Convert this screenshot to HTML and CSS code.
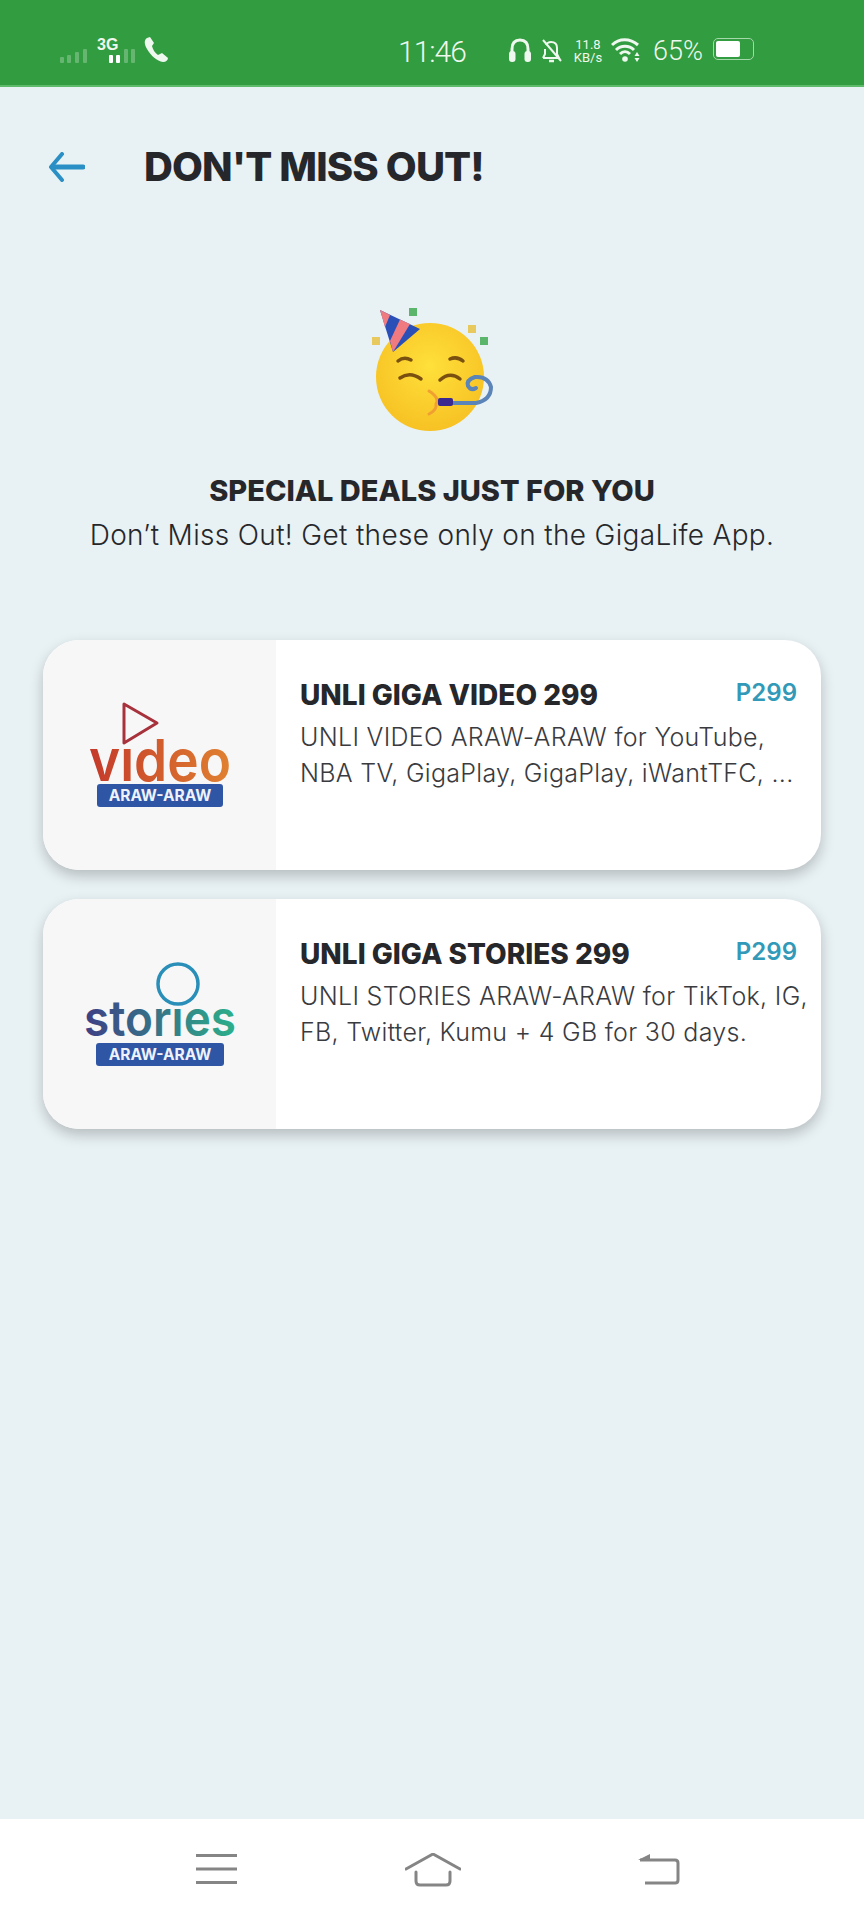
FILE: index.html
```html
<!DOCTYPE html>
<html lang="en">
    <head>
        <meta charset="UTF-8" />
        <meta name="viewport" content="width=device-width, initial-scale=1.0" />
        <title>Don't Miss Out</title>
        <link rel="stylesheet" href="styles.css">
    </head>
    <body>
        <div class="status-bar">
            <svg class="signal" width="76" height="28" viewBox="0 0 76 28">
                <g fill="#fff" opacity="0.25">
                    <rect x="0" y="21" width="4" height="6" rx="1" />
                    <rect x="7" y="19" width="4" height="8" rx="1" />
                    <rect x="15" y="16" width="4" height="11" rx="1" />
                    <rect x="23" y="13" width="4" height="14" rx="1" />
                    <rect x="64" y="13" width="4" height="14" rx="1" />
                    <rect x="71" y="13" width="4" height="14" rx="1" />
                </g>
                <g fill="#fff">
                    <rect x="49" y="19" width="4" height="8" rx="1" />
                    <rect x="56" y="19" width="4" height="8" rx="1" />
                </g>
                <text x="37" y="14" class="signal-label">3G</text>
            </svg>
            <svg class="phone" width="24" height="26" viewBox="0 0 24 26">
                <path d="M3 1 C0 3 0 7 3 12 C7 19 13 24 19 25 C22 25 24 23 24 21 L18 16 L14 18 C11 16 9 13 8 9 L10 6 L6 0 Z" fill="#eef8ee" />
            </svg>
            <span class="clock">11:46</span>
            <div class="status-right">
                <svg width="22" height="25" viewBox="0 0 22 25">
                    <path d="M3 17 V11 C3 5 6 2 11 2 C16 2 19 5 19 11 V17" fill="none" stroke="#eef8ee" stroke-width="3" />
                    <rect x="0" y="13" width="6.500" height="11" rx="3" fill="#eef8ee" />
                    <rect x="15.500" y="13" width="6.500" height="11" rx="3" fill="#eef8ee" />
                </svg>
                <svg class="bell" width="22" height="26" viewBox="0 0 22 26">
                    <path d="M2 20 H18 L16 16 V10 C16 6 14 4 10 4 C8 4 6 5 5 7 M4 11 V16 L2 20" fill="none" stroke="#eef8ee" stroke-width="2" />
                    <path d="M8 23 H13" stroke="#eef8ee" stroke-width="2.500" />
                    <path d="M2 2 L20 23" stroke="#eef8ee" stroke-width="2" />
                </svg>
                <div class="speed">
                    <span>11.8</span>
                    <span>KB/s</span>
                </div>
                <svg class="wifi" width="30" height="25" viewBox="0 0 30 25">
                    <path d="M1 7 C8 0 19 0 27 7 M5 12 C10 7 18 7 23 12 M9 16 C12 13 16 13 19 16" fill="none" stroke="#eef8ee" stroke-width="3" />
                    <circle cx="14" cy="21" r="2.800" fill="#eef8ee" />
                    <path d="M26 14 L28.500 18 H23.500 Z M26 24 L28.500 20 H23.500 Z" fill="#eef8ee" />
                </svg>
                <span class="battery-pct">65%</span>
                <div class="battery"><div class="battery-fill"></div></div>
            </div>
        </div>
        <div class="status-line"></div>

        <div class="top-row">
            <svg width="36" height="30" viewBox="0 0 36 30">
                <path d="M13 2 L2 15 L13 28" fill="none" stroke="#2a8fc4" stroke-width="4" stroke-linecap="round" stroke-linejoin="round" />
                <path d="M4 15 H34" fill="none" stroke="#2a8fc4" stroke-width="5" stroke-linecap="round" />
            </svg>
            <h1>DON'T MISS OUT!</h1>
        </div>

        <div class="intro">
            <svg class="party" width="180" height="160" viewBox="0 0 180 160">
                <defs>
                    <radialGradient id="faceFill" cx="0.5" cy="0.4" r="0.65">
                        <stop offset="0" stop-color="#ffe03a" />
                        <stop offset="1" stop-color="#f6bf22" />
                    </radialGradient>
                </defs>
                <circle cx="90" cy="87" r="54" fill="url(#faceFill)" />
                <polygon points="40,20 80,39 53,62" fill="#2a50b8" />
                <polygon points="40,20 50,25 45,37" fill="#ef7a80" />
                <polygon points="60,29.500 70,34 53,62 50,51" fill="#ef7a80" />
                <g fill="#5bb56a">
                    <rect x="69" y="18" width="8" height="8" />
                    <rect x="140" y="47" width="8" height="8" />
                </g>
                <g fill="#e8c95e">
                    <rect x="32" y="47" width="8" height="8" />
                    <rect x="128" y="35" width="8" height="8" />
                </g>
                <g fill="none" stroke="#7a5010" stroke-width="3.500" stroke-linecap="round">
                    <path d="M58 71 Q64 66 71 70" />
                    <path d="M110 69 Q117 66 123 71" />
                    <path d="M60 88 Q70 81 81 89" />
                    <path d="M100 90 Q110 81 120 89" />
                </g>
                <path d="M89 101 Q100 108 96 114 Q97 120 89 124" fill="none" stroke="#f0a030" stroke-width="3" stroke-linecap="round" />
                <path d="M113 113 H136 Q151 110 151 97 Q148 86 135 87 Q126 90 128 96 Q131 101 136 98" fill="none" stroke="#5b85b8" stroke-width="4" stroke-linecap="round" />
                <rect x="98" y="108" width="15" height="8" rx="2" fill="#3a2a90" />
            </svg>
            <h2>SPECIAL DEALS JUST FOR YOU</h2>
            <p class="intro-sub">Don’t Miss Out! Get these only on the GigaLife App.</p>
        </div>

        <div class="deals">
            <div class="card">
                <div class="card-logo">
                    <svg width="160" height="120" viewBox="0 0 160 120">
                        <defs>
                            <linearGradient id="videoFill" gradientUnits="userSpaceOnUse" x1="11" y1="0" x2="149" y2="0">
                                <stop offset="0" stop-color="#c43a2a" />
                                <stop offset="1" stop-color="#e08030" />
                            </linearGradient>
                        </defs>
                        <path d="M44 9 L77 28 L44 48 Z" fill="none" stroke="#a8323c" stroke-width="3" stroke-linejoin="round" />
                        <text x="9" y="86" textLength="142" lengthAdjust="spacingAndGlyphs" class="logo-word" fill="url(#videoFill)">vıdeo</text>
                        <rect x="17" y="89" width="126" height="23" rx="3" fill="#2f55a5" />
                        <text x="80" y="106" class="logo-badge">ARAW-ARAW</text>
                    </svg>
                </div>
                <div class="card-body">
                    <div class="card-head">
                        <span class="card-title">UNLI GIGA VIDEO 299</span>
                        <span class="card-price">P299</span>
                    </div>
                    <p class="card-text">UNLI VIDEO ARAW-ARAW for YouTube, NBA TV, GigaPlay, GigaPlay, iWantTFC, ...</p>
                </div>
            </div>
            <div class="card">
                <div class="card-logo">
                    <svg width="160" height="120" viewBox="0 0 160 120">
                        <defs>
                            <linearGradient id="storiesFill" gradientUnits="userSpaceOnUse" x1="5" y1="0" x2="154" y2="0">
                                <stop offset="0" stop-color="#3e3f85" />
                                <stop offset="1" stop-color="#2cae8a" />
                            </linearGradient>
                        </defs>
                        <circle cx="98" cy="30" r="20" fill="none" stroke="#2a8fb8" stroke-width="3.500" />
                        <text x="4" y="82" textLength="152" lengthAdjust="spacingAndGlyphs" class="logo-word logo-word-small" fill="url(#storiesFill)">storıes</text>
                        <rect x="16" y="89" width="128" height="23" rx="3" fill="#2f55a5" />
                        <text x="80" y="106" class="logo-badge">ARAW-ARAW</text>
                    </svg>
                </div>
                <div class="card-body">
                    <div class="card-head">
                        <span class="card-title">UNLI GIGA STORIES 299</span>
                        <span class="card-price">P299</span>
                    </div>
                    <p class="card-text">UNLI STORIES ARAW-ARAW for TikTok, IG, FB, Twitter, Kumu + 4 GB for 30 days.</p>
                </div>
            </div>
        </div>

        <div class="nav-bar">
            <svg width="41" height="32" viewBox="0 0 41 32">
                <path d="M0 2.500 H41 M0 16 H41 M0 29.500 H41" stroke="#858585" stroke-width="3" />
            </svg>
            <svg class="nav-home" width="56" height="34" viewBox="0 0 56 34">
                <path d="M1 16 L28 1 L55 16" fill="none" stroke="#858585" stroke-width="3" stroke-linecap="round" stroke-linejoin="round" />
                <path d="M11 19 V28 Q11 32 15 32 H41 Q45 32 45 28 V19" fill="none" stroke="#858585" stroke-width="3" stroke-linecap="round" />
            </svg>
            <svg width="42" height="32" viewBox="0 0 42 32">
                <path d="M0 7 L12 1 V7 Z" fill="#858585" />
                <path d="M2 7 H37 Q40 7 40 10 V27 Q40 30 37 30 H7" fill="none" stroke="#858585" stroke-width="3" />
            </svg>
        </div>
    </body>
</html>
```

FILE: styles.css
```css
body {
    font-family: Inter, "Liberation Sans", sans-serif;
    background-color: #e8f1f4;
    margin: 0;
    padding: 0;
    width: 864px;
    height: 1920px;
    display: flex;
    flex-direction: column;
    overflow: hidden;
    color: #26272b;
}
h1,
h2,
p {
    margin: 0;
}
.status-bar {
    background-color: #329c40;
    height: 85px;
    padding: 36px 0 0 60px;
    box-sizing: border-box;
    display: flex;
    align-items: flex-start;
    color: #eef8ee;
}
.status-line {
    height: 2px;
    background-color: #5dbb6b;
}
.phone {
    margin: 1px 0 0 8px;
}
.signal-label {
    font-family: "Liberation Sans", sans-serif;
    font-size: 16px;
    font-weight: 700;
    fill: #eef8ee;
}
.clock {
    font-family: Roboto, sans-serif;
    font-size: 30px;
    font-weight: 300;
    line-height: 32px;
    letter-spacing: -1px;
    margin: 0 0 0 230px;
    width: 66px;
}
.status-right {
    display: flex;
    align-items: flex-start;
    margin-left: 45px;
    gap: 10px;
    padding-top: 2px;
}
.speed {
    display: flex;
    flex-direction: column;
    font-family: Roboto, sans-serif;
    font-size: 13px;
    line-height: 13px;
    width: 30px;
    text-align: center;
}
.wifi {
    margin-left: -2px;
}
.battery-pct {
    font-family: Roboto, sans-serif;
    font-size: 27px;
    font-weight: 300;
    line-height: 27px;
    margin-left: 2px;
}
.battery {
    width: 41px;
    height: 22px;
    border: 1px solid #a5d8ab;
    border-radius: 5px;
    box-sizing: border-box;
    padding: 2px;
}
.battery-fill {
    width: 24px;
    height: 100%;
    background-color: #fff;
    border-radius: 2px;
}
.top-row {
    display: flex;
    align-items: center;
    padding: 60px 0 0 49px;
    gap: 59px;
}
h1 {
    font-size: 40px;
    font-weight: 800;
    line-height: 40px;
    letter-spacing: -0.85px;
}
.intro {
    display: flex;
    flex-direction: column;
    align-items: center;
    margin-top: 103px;
}
.party {
    margin-left: -4px;
}
h2 {
    font-size: 29px;
    font-weight: 800;
    line-height: 34px;
    margin-top: 24px;
}
.intro-sub {
    font-size: 28px;
    font-weight: 300;
    line-height: 36px;
    letter-spacing: 0.33px;
    margin-top: 9px;
}
.deals {
    display: flex;
    flex-direction: column;
    gap: 29px;
    margin: 87px 43px 0;
}
.card {
    display: flex;
    height: 230px;
    background-color: #fff;
    border-radius: 36px;
    box-shadow: 0 6px 14px rgba(0, 0, 0, 0.22);
    overflow: hidden;
}
.card-logo {
    width: 233px;
    flex-shrink: 0;
    background-color: #f7f7f8;
    display: flex;
    align-items: center;
    justify-content: center;
}
.logo-word {
    font-family: Inter, sans-serif;
    font-size: 58px;
    font-weight: 600;
}
.logo-word-small {
    font-size: 50px;
}
.logo-badge {
    font-family: Inter, sans-serif;
    font-size: 15.500px;
    font-weight: 700;
    fill: #eef2fa;
    text-anchor: middle;
}
.card-body {
    flex: 1;
    padding: 37px 10px 0 24px;
}
.card-head {
    display: flex;
    justify-content: space-between;
    align-items: flex-start;
    padding-right: 14px;
}
.card-title {
    font-size: 28px;
    font-weight: 800;
    line-height: 36px;
}
.card-price {
    font-size: 24px;
    font-weight: 600;
    line-height: 30px;
    margin-top: 1px;
    color: #3299b8;
}
.card-text {
    font-size: 25px;
    font-weight: 300;
    line-height: 36px;
    letter-spacing: 0.3px;
    margin-top: 6px;
    color: #3a3b3f;
}
.nav-bar {
    margin-top: auto;
    height: 101px;
    background-color: #fff;
    display: flex;
    align-items: flex-start;
    padding: 34px 0 0 196px;
    box-sizing: border-box;
}
.nav-home {
    margin: 0 177px 0 168px;
}
```
